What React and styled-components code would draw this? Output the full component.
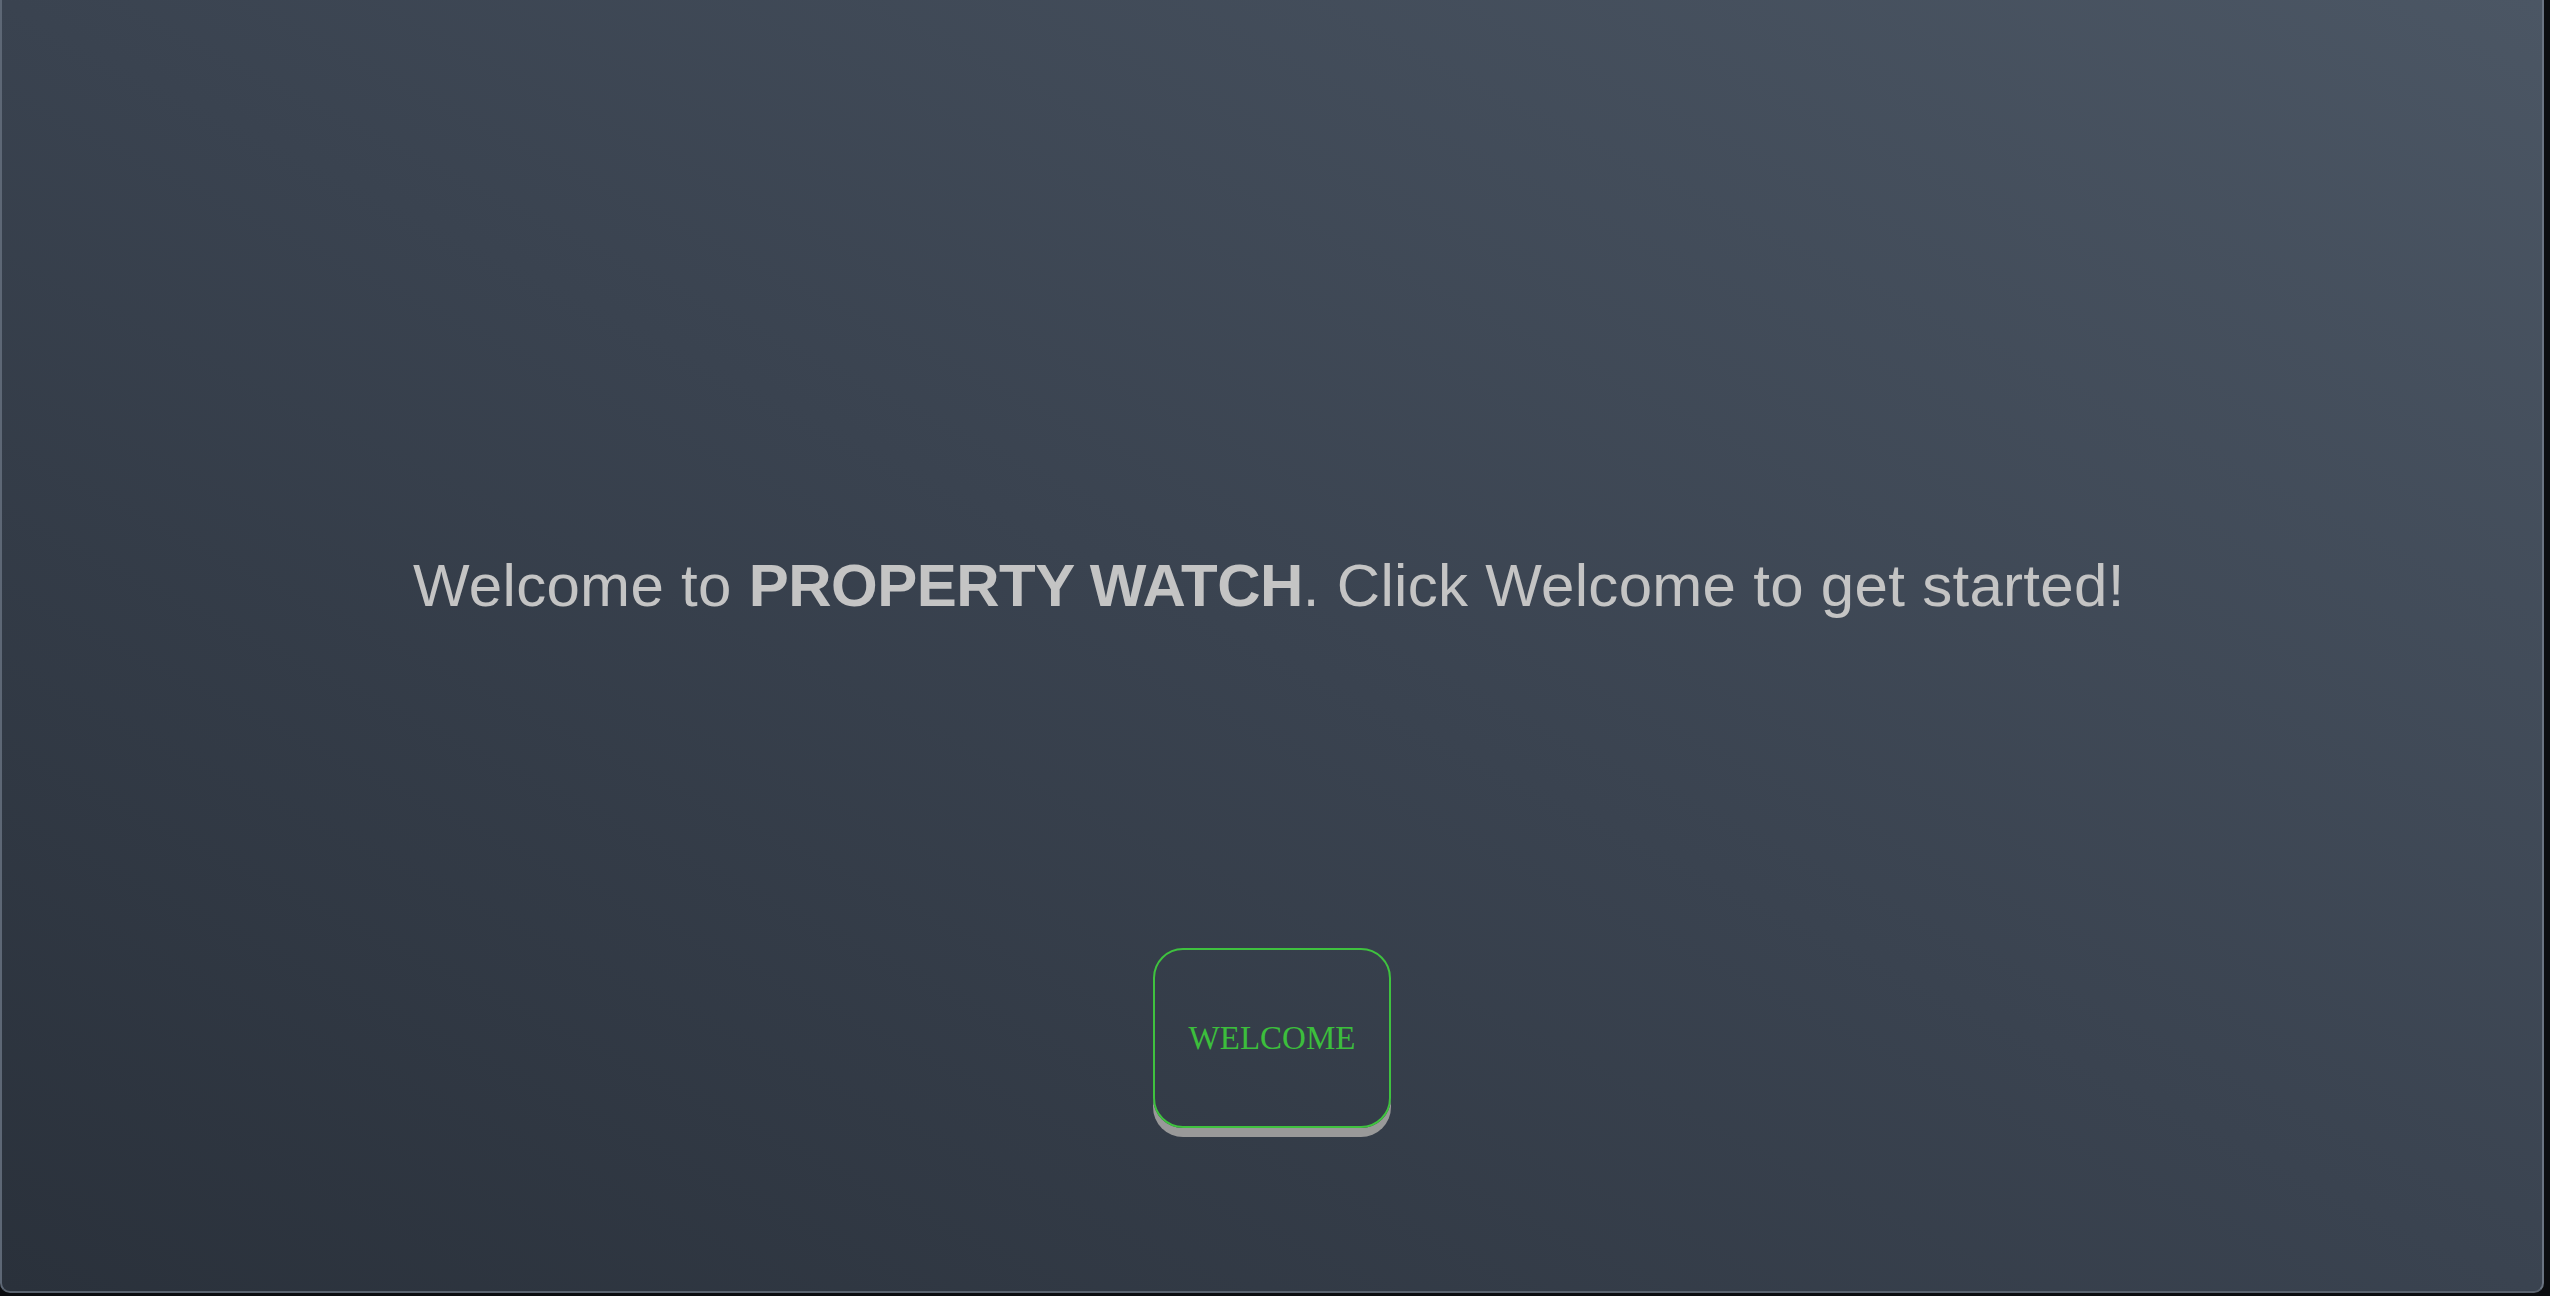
import React from 'react';
import styled, { createGlobalStyle } from 'styled-components';

const GlobalStyle = createGlobalStyle`
  html, body {
    margin: 0;
    padding: 0;
    background: #0b0d10;
    overflow: hidden;
  }
`;

// main landing panel
const Page = styled.div`
  box-sizing: border-box;
  width: 2544px;
  height: 1293px;
  display: flex;
  flex-direction: column;
  align-items: flex-start;
  padding-top: 551px;
  background: linear-gradient(to top right, #2a313b 0%, #3a4350 50%, #4b5664 100%);
  border-left: 2px solid #5d6775;
  border-right: 2px solid #6a7482;
  border-bottom: 2px solid #5a636f;
  border-radius: 0 0 10px 10px;
`;

const Headline = styled.h1`
  margin: 0 0 0 411px;
  font-family: 'Liberation Sans', Arial, Helvetica, sans-serif;
  font-size: 60px;
  line-height: 70px;
  font-weight: 400;
  letter-spacing: 0.3px;
  color: #c4c4c4;
  white-space: nowrap;

  strong {
    font-weight: 700;
    letter-spacing: -0.5px;
  }
`;

const ButtonRow = styled.div`
  align-self: stretch;
  display: flex;
  justify-content: center;
  padding-top: 327px;
`;

const WelcomeButton = styled.button`
  box-sizing: border-box;
  width: 238px;
  height: 180px;
  border: 2px solid #3fc23f;
  border-radius: 30px;
  background: transparent;
  box-shadow: 0 9px 0 #999999;
  color: #3cbe3c;
  font-family: 'Liberation Serif', 'Times New Roman', serif;
  font-size: 33px;
  cursor: pointer;
`;

const App = () => {
  return (
    <>
      <GlobalStyle />
      <Page>
        <Headline>
          Welcome to <strong>PROPERTY WATCH</strong>. Click Welcome to get started!
        </Headline>
        <ButtonRow>
          <WelcomeButton>WELCOME</WelcomeButton>
        </ButtonRow>
      </Page>
    </>
  );
};

export default App;
